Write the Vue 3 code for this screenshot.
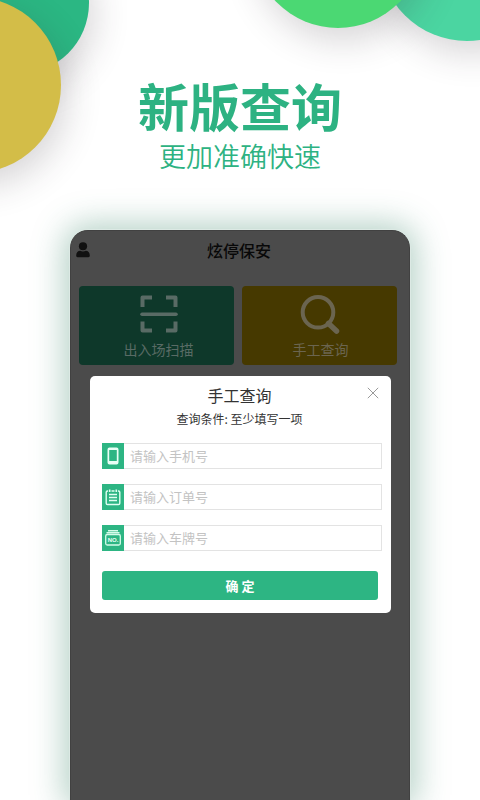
<script setup>
import { reactive } from 'vue'

const fields = [
  { id: 'phone', label: '手机号', placeholder: '请输入手机号' },
  { id: 'order', label: '订单号', placeholder: '请输入订单号' },
  { id: 'plate', label: '车牌号', placeholder: '请输入车牌号' },
]
const form = reactive({ phone: '', order: '', plate: '' })
</script>

<template>
  <main class="page">
    <div class="decor" aria-hidden="true">
      <span class="circle green"></span>
      <span class="circle gold"></span>
      <span class="circle teal"></span>
      <span class="circle lime"></span>
    </div>

    <header class="hero">
      <h1>新版查询</h1>
      <p>更加准确快速</p>
    </header>

    <section class="phone">
      <div class="topbar">
        <svg class="user" viewBox="0 0 14 16" aria-hidden="true">
          <ellipse cx="7" cy="4.200" rx="4.100" ry="4" />
          <path d="M.2 13.600C.2 10.400 2 8.800 4.200 8.700c1.800 1 3.800 1 5.600 0 2.200.1 4 1.700 4 4.900 0 1-.5 1.600-1.400 1.600H1.600C.7 15.200.2 14.600.2 13.600Z" />
        </svg>
        <h2>炫停保安</h2>
      </div>

      <div class="tiles">
        <button type="button" class="tile scan">
          <svg viewBox="0 0 38 38" fill="none" stroke="currentColor" stroke-width="4" stroke-linejoin="round" aria-hidden="true">
            <path d="M2.500 12V2.500H12M26 2.500H35.500V12M2.500 26.500V35.500H12M26 35.500H35.500V26.500" />
            <path d="M2 19.200H36" stroke-width="3.500" stroke-linecap="round" />
          </svg>
          <span>出入场扫描</span>
        </button>
        <button type="button" class="tile manual">
          <svg viewBox="0 0 38 38" fill="none" stroke="currentColor" stroke-width="4" aria-hidden="true">
            <circle cx="16" cy="17.300" r="15.300" />
            <path d="M26.500 28.500L34.500 36" stroke-width="5.500" stroke-linecap="round" />
          </svg>
          <span>手工查询</span>
        </button>
      </div>

      <form class="dialog" role="dialog" aria-labelledby="dialog-title" @submit.prevent>
        <button type="button" class="close" aria-label="关闭">
          <svg viewBox="0 0 12 12" aria-hidden="true"><path d="M.8.8l10.400 10.400M11.200.8L.8 11.200" /></svg>
        </button>
        <div class="heading">
          <h3 id="dialog-title">手工查询</h3>
          <p class="hint">查询条件: 至少填写一项</p>
        </div>

        <div class="fields">
          <div v-for="f in fields" :key="f.id" class="field">
            <label :for="f.id" :aria-label="f.label">
              <svg v-if="f.id === 'phone'" viewBox="0 0 22 26" aria-hidden="true">
                <path fill="#e9fff6" fill-rule="evenodd" d="M7.500 4.500h7a2 2 0 0 1 2 2v13a2 2 0 0 1-2 2h-7a2 2 0 0 1-2-2v-13a2 2 0 0 1 2-2ZM7.200 7v11h7.600V7Z" />
              </svg>
              <svg v-else-if="f.id === 'order'" viewBox="0 0 22 26" fill="none" stroke="#e0fff2" aria-hidden="true">
                <path stroke-width="1.400" d="M6 7H5.500a1.300 1.300 0 0 0-1.300 1.300v10.900a1.300 1.300 0 0 0 1.300 1.300h11a1.300 1.300 0 0 0 1.300-1.300V8.300A1.300 1.300 0 0 0 16.500 7H16M9.500 7h3" />
                <path stroke-width="1.600" d="M7.700 5.500v2.600M14.300 5.500v2.600" />
                <path stroke-width="1.300" d="M7 10.500h8M7 13.500h8M7 16.500h8" />
              </svg>
              <svg v-else viewBox="0 0 22 26" fill="none" stroke="#d5fbea" aria-hidden="true">
                <path stroke-width="1.400" d="M6 5.700h10M4.500 7.700h13" />
                <rect x="3.700" y="9.500" width="14.600" height="10.500" rx="1.500" stroke-width="1.300" />
                <text x="11" y="17" text-anchor="middle">NO.</text>
              </svg>
            </label>
            <input :id="f.id" v-model="form[f.id]" type="text" :placeholder="f.placeholder" />
          </div>
        </div>

        <button type="submit" class="confirm">确 定</button>
      </form>
    </section>
  </main>
</template>

<style>
body {
  margin: 0;
}
</style>

<style scoped>
* {
  box-sizing: border-box;
}

h1,
h2,
h3,
p {
  margin: 0;
  font-weight: 400;
}

button,
input {
  font-family: inherit;
}

.page {
  position: relative;
  display: flex;
  flex-direction: column;
  min-height: 100vh;
  overflow: hidden;
  background: #fff;
  font-family: "Noto Sans CJK SC", sans-serif;
}

.decor {
  position: absolute;
  inset: 0;
}

.circle {
  position: absolute;
  border-radius: 50%;
  box-shadow: 5px 12px 36px rgba(50, 40, 50, 0.2);
}

.green {
  left: -53px;
  top: -68px;
  width: 142px;
  height: 142px;
  background: #2bb783;
}

.gold {
  left: -115px;
  top: -3px;
  width: 176px;
  height: 176px;
  background: #d3bd48;
}

.teal {
  right: -75px;
  top: -135px;
  width: 176px;
  height: 176px;
  background: #4bd5a1;
}

.lime {
  right: 56px;
  top: -144px;
  width: 172px;
  height: 172px;
  background: #4bd873;
}

.hero {
  position: relative;
  padding: 75px 16px 0;
  color: #2db282;
  text-align: center;
}

.hero h1 {
  font-size: 51px;
  font-weight: 700;
  line-height: 60px;
}

.hero p {
  padding-top: 3px;
  font-size: 27px;
  font-weight: 350;
  line-height: 36px;
}

.phone {
  position: relative;
  flex: 1;
  margin: 56px 70px 0;
  padding: 0 12px 0 8px;
  border: 1px solid #414141;
  border-bottom: 0;
  border-radius: 18px 18px 0 0;
  background: #4b4b4b;
  box-shadow: 0 0 0 1px #dce9e4, 0 0 32px 6px rgba(45, 125, 95, 0.36);
}

.topbar {
  display: grid;
  grid-template-columns: 1fr auto 1fr;
  align-items: center;
  height: 38px;
  margin: 0 -5px 17px -3px;
}

.topbar h2 {
  color: #080808;
  font-size: 16px;
  font-weight: 500;
}

.user {
  width: 14px;
  height: 16px;
  fill: #111;
}

.tiles {
  display: grid;
  grid-template-columns: 1fr 1fr;
  gap: 8px;
}

.tile {
  display: flex;
  flex-direction: column;
  align-items: center;
  height: 79px;
  padding: 9px 0 0 4px;
  border: 0;
  border-radius: 4px;
  font-size: 14px;
  line-height: 20px;
}

.tile svg {
  width: 38px;
  height: 38px;
  margin-bottom: 6px;
  overflow: visible;
}

.scan {
  background: #0e382a;
  color: #596b65;
}

.manual {
  padding-left: 2px;
  background: #463900;
  color: #6b6550;
}

.dialog {
  position: absolute;
  inset: 145px 18px auto 19px;
  padding: 8px 9px 13px 12px;
  border-radius: 5px;
  background: #fff;
  color: #333;
  text-align: center;
}

.heading {
  padding-right: 5px;
}

.dialog h3 {
  font-size: 16px;
  line-height: 22px;
}

.hint {
  padding-top: 3px;
  font-size: 12px;
  line-height: 20px;
}

.close {
  position: absolute;
  top: 6px;
  right: 7px;
  display: grid;
  place-items: center;
  width: 22px;
  height: 22px;
  padding: 0;
  border: 0;
  background: none;
}

.close svg {
  width: 12px;
  height: 12px;
  stroke: #999;
}

.fields {
  display: grid;
  gap: 15px;
  padding: 14px 0 20px;
}

.field {
  display: flex;
  height: 26px;
}

.field label {
  width: 22px;
  background: #2db583;
}

.field svg {
  display: block;
  width: 22px;
  height: 26px;
}

.field text {
  fill: #e9fff6;
  stroke: none;
  font: 700 6px "Liberation Sans", sans-serif;
}

.field input {
  flex: 1;
  min-width: 0;
  padding: 0 6px 2px;
  border: 1px solid #e3e3e3;
  border-left: 0;
  border-radius: 0;
  background: #fff;
  color: #333;
  font-size: 13px;
}

.field input::placeholder {
  color: #c3c3c3;
}

.confirm {
  display: block;
  width: calc(100% - 4px);
  height: 29px;
  padding: 0;
  border: 0;
  border-radius: 3px;
  background: #2db583;
  color: #fff;
  font-size: 13px;
  font-weight: 700;
}
</style>
